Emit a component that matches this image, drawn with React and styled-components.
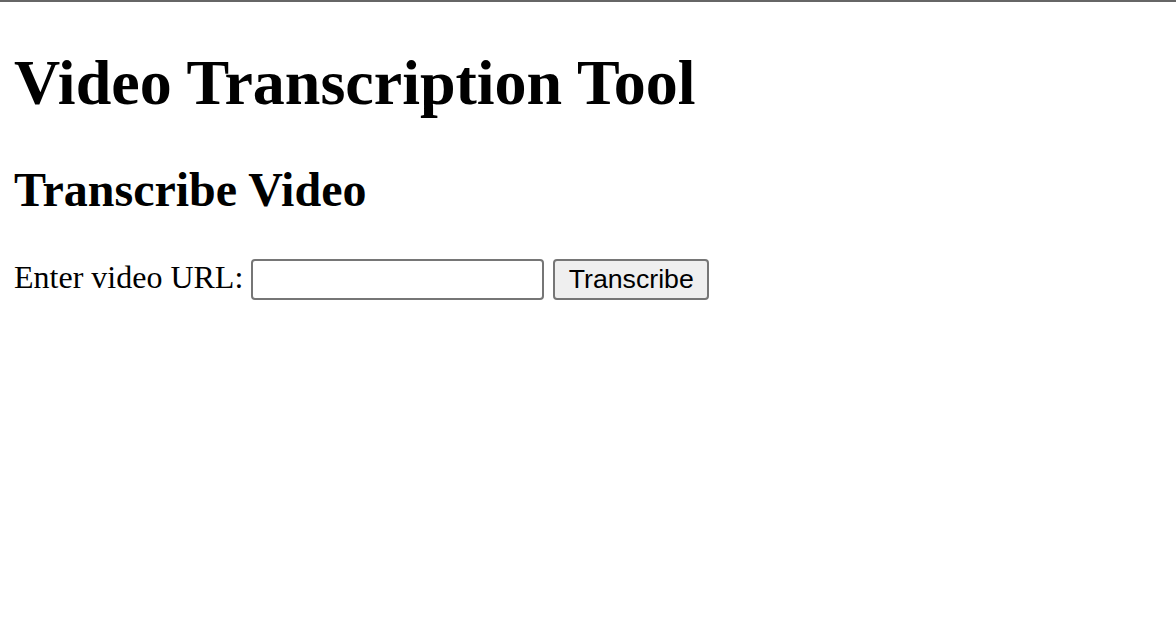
import styled, { createGlobalStyle } from 'styled-components';

const GlobalStyle = createGlobalStyle`
  html, body {
    margin: 0;
    padding: 0;
    background: #ffffff;
  }
  body {
    font-family: "Liberation Serif", "Times New Roman", serif;
    color: #000000;
  }
`;

const Page = styled.div`
  border-top: 2px solid #666666;
  padding: 0 14px;
  min-height: 642px;
`;

const Title = styled.h1`
  font-size: 64px;
  font-weight: bold;
  margin: 44px 0 0;
  line-height: 74px;
`;

const Subtitle = styled.h2`
  font-size: 48px;
  font-weight: bold;
  margin: 42px 0 0;
  line-height: 55px;
`;

const Form = styled.form`
  display: flex;
  align-items: center;
  margin-top: 42px;
  font-size: 32px;
`;

const Label = styled.label`
  line-height: 37px;
  margin-right: 8px;
  padding-bottom: 4px;
`;

const UrlInput = styled.input`
  width: 293px;
  height: 41px;
  box-sizing: border-box;
  border: 2px solid #767676;
  border-radius: 4px;
  background: #ffffff;
  padding: 2px 4px;
  font-size: 26px;
  outline: none;
  margin-right: 9px;
`;

const Button = styled.button`
  width: 156px;
  height: 41px;
  box-sizing: border-box;
  padding: 0;
  border: 2px solid #767676;
  border-radius: 4px;
  background: #efefef;
  font-family: "Liberation Sans", Arial, sans-serif;
  font-size: 26.7px;
  color: #000000;
  cursor: pointer;
`;

export default function App() {
  return (
    <Page>
      <GlobalStyle />
      <Title>Video Transcription Tool</Title>
      <Subtitle>Transcribe Video</Subtitle>
      <Form onSubmit={(e) => e.preventDefault()}>
        <Label htmlFor="url">Enter video URL:</Label>
        <UrlInput id="url" type="text" />
        <Button type="submit">Transcribe</Button>
      </Form>
    </Page>
  );
}
